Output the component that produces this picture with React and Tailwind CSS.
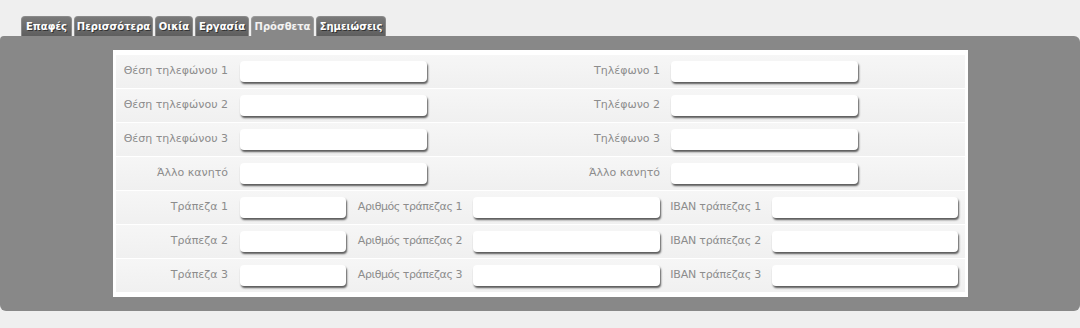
import React from "react";

const tabs = [
  ["Επαφές", "w-[51px]"],
  ["Περισσότερα", "w-[79px]"],
  ["Οικία", "w-[38px]"],
  ["Εργασία", "w-[54px]"],
  ["Πρόσθετα", "w-[63px]"],
  ["Σημειώσεις", "w-[70px]"],
];

function Input({ w }) {
  return (
    <div
      className={`${w} h-[21px] bg-white rounded-[4px] shadow-[1px_2px_2px_#5a5a5a]`}
    />
  );
}

function Label({ w, extra = "", children }) {
  return (
    <div className={`${w} ${extra} shrink-0 text-right text-[11px] text-[#8c8c8c] whitespace-nowrap`}>
      {children}
    </div>
  );
}

function RowA({ l1, l2 }) {
  return (
    <div className="h-[34px] flex items-center bg-[linear-gradient(#f6f6f6,#f0f0f0)] border-b border-white">
      <Label w="w-[112px]">{l1}</Label>
      <div className="w-[12px]" />
      <Input w="w-[187px]" />
      <Label w="w-[233px]">{l2}</Label>
      <div className="w-[11px]" />
      <Input w="w-[187px]" />
    </div>
  );
}

function RowB({ n }) {
  return (
    <div className="h-[34px] flex items-center bg-[linear-gradient(#f6f6f6,#f0f0f0)] border-b border-white">
      <Label w="w-[112px]">Τράπεζα {n}</Label>
      <div className="w-[12px]" />
      <Input w="w-[106px]" />
      <Label w="w-[116px]" extra="tracking-[-0.45px]">Αριθμός τράπεζας {n}</Label>
      <div className="w-[11px]" />
      <Input w="w-[187px]" />
      <Label w="w-[101px]" extra="tracking-[-0.2px]">IBAN τράπεζας {n}</Label>
      <div className="w-[11px]" />
      <Input w="w-[186px]" />
    </div>
  );
}

export default function App() {
  return (
    <div className="w-[1080px] h-[328px] bg-[#efefef] font-['DejaVu_Sans',sans-serif] pt-[16px]">
      <div className="flex gap-[2px] pl-[21px] h-[20px]">
        {tabs.map(([t, w]) => {
          const active = t === "Πρόσθετα";
          return (
            <div
              key={t}
              className={`${w} h-[20px] flex items-center justify-center rounded-t-[4px] text-[10px] font-bold whitespace-nowrap ${
                active
                  ? "bg-[#888888] text-[#f2f2f2] border border-b-0 border-[#9a9a9a]"
                  : "bg-[linear-gradient(#7a7a7a,#5e5e5e)] text-white border border-b-0 border-[#8a8a8a] [text-shadow:1px_1px_0_#333]"
              }`}
            >
              {t}
            </div>
          );
        })}
      </div>
      <div className="h-[275px] bg-[#888888] rounded-[6px] rounded-tl-[4px] pt-[14px]">
        <div className="ml-[113px] w-[855px] h-[247px] bg-white pt-[5px] px-[3px]">
          <RowA l1="Θέση τηλεφώνου 1" l2="Τηλέφωνο 1" />
          <RowA l1="Θέση τηλεφώνου 2" l2="Τηλέφωνο 2" />
          <RowA l1="Θέση τηλεφώνου 3" l2="Τηλέφωνο 3" />
          <RowA l1="Άλλο κανητό" l2="Άλλο κανητό" />
          <RowB n={1} />
          <RowB n={2} />
          <RowB n={3} />
        </div>
      </div>
    </div>
  );
}
